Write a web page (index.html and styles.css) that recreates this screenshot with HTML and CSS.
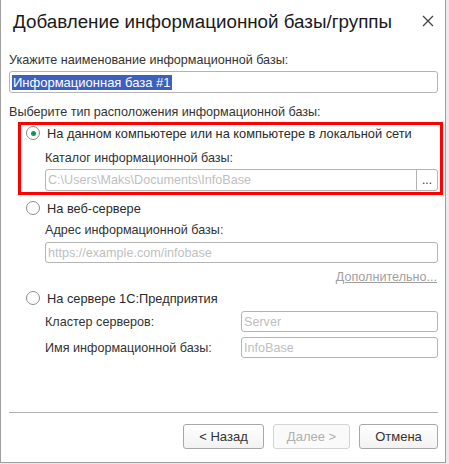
FILE: index.html
```html
<!DOCTYPE html>
<html lang="ru">
<head>
  <meta charset="UTF-8">
  <title>Добавление информационной базы/группы</title>
  <link rel="stylesheet" href="styles.css">
</head>
<body>

<div class="window">
  <!-- Title -->
  <div class="title-bar">
    <span class="title">Добавление информационной базы/группы</span>
    <span class="close">
      <svg width="12" height="12" viewBox="0 0 12 12"><path d="M1 1L11 11M11 1L1 11" stroke="#444" stroke-width="1.3"/></svg>
    </span>
  </div>

  <div class="content">
    <div class="row label">Укажите наименование информационной базы:</div>
    <div class="field name-field"><span class="selected">Информационная база #1</span></div>

    <div class="row label type-label">Выберите тип расположения информационной базы:</div>

    <div class="highlight">
      <div class="radio-row first">
        <span class="radio checked"></span>
        <span>На данном компьютере или на компьютере в локальной сети</span>
      </div>
      <div class="row sub label">Каталог информационной базы:</div>
      <div class="field sub path-field">
        <span class="placeholder">C:\Users\Maks\Documents\InfoBase</span>
        <span class="choose">...</span>
      </div>
    </div>

    <div class="radio-row web">
      <span class="radio"></span>
      <span>На веб-сервере</span>
    </div>
    <div class="row sub label addr-label">Адрес информационной базы:</div>
    <div class="field sub url-field"><span class="placeholder">https://example.com/infobase</span></div>
    <div class="row link-row"><a class="more">Дополнительно...</a></div>

    <div class="radio-row server">
      <span class="radio"></span>
      <span>На сервере 1С:Предприятия</span>
    </div>
    <div class="pair cluster">
      <span class="label">Кластер серверов:</span>
      <div class="field short"><span class="placeholder">Server</span></div>
    </div>
    <div class="pair ibname">
      <span class="label">Имя информационной базы:</span>
      <div class="field short"><span class="placeholder">InfoBase</span></div>
    </div>

    <div class="separator"></div>

    <div class="buttons">
      <button class="btn back">&lt; Назад</button>
      <button class="btn next" disabled>Далее &gt;</button>
      <button class="btn cancel">Отмена</button>
    </div>
  </div>
</div>

</body>
</html>
```

FILE: styles.css
```css
body, html {
  margin: 0;
  padding: 0;
  font-family: "Liberation Sans", Arial, sans-serif;
  background-color: #e9ecef;
}
.window {
  width: 444px;
  height: 462px;
  background: white;
  border-left: 1px solid #a0a0a0;
  border-right: 1px solid #a0a0a0;
  border-bottom: 1px solid #a0a0a0;
}
.title-bar {
  height: 44px;
  display: flex;
  align-items: center;
  justify-content: space-between;
  padding: 0 11px 0 12px;
}
.title {
  font-size: 18.8px;
  color: #1a1a1a;
}
.close {
  display: flex;
  margin-top: -2px;
}
.content {
  padding: 0 7px 0 8px;
  font-size: 12.6px;
  color: #333;
}
.row {
  height: 20px;
  display: flex;
  align-items: center;
}
.label {
  white-space: nowrap;
}
.content > .row.label:first-child {
  margin-top: 6px;
}
.field {
  height: 22px;
  box-sizing: border-box;
  border: 1px solid #b4b4b4;
  border-radius: 3px;
  display: flex;
  align-items: center;
  padding-left: 2px;
  overflow: hidden;
}
.name-field {
  margin-top: 1px;
  color: #1a1a1a;
}
.selected {
  background: #3d5fbf;
  color: white;
  line-height: 15px;
  padding: 0 1px;
  font-size: 13px;
}
.type-label {
  margin-top: 9px;
}
.placeholder {
  color: #c0c0c0;
  flex-grow: 1;
}
.highlight {
  margin: 0 -5px 0 9px;
  border: 3px solid #ff0000;
  padding: 0 2px 1px 5px;
}
.radio-row {
  display: flex;
  align-items: center;
  height: 20px;
  gap: 7px;
  font-size: 12.8px;
  color: #2b2b2b;
}
.radio-row.first {
  height: 14px;
  margin-top: 1px;
}
.radio {
  width: 14px;
  height: 14px;
  box-sizing: border-box;
  border: 1px solid #8c8c8c;
  border-radius: 50%;
  display: flex;
  align-items: center;
  justify-content: center;
  background: white;
}
.radio.checked::after {
  content: "";
  width: 5px;
  height: 5px;
  border-radius: 50%;
  background: #14935a;
}
.highlight .sub {
  margin-left: 19px;
}
.highlight .row.sub {
  margin-top: 8px;
}
.path-field {
  margin-top: 1px;
  padding-right: 0;
}
.choose {
  width: 20px;
  height: 100%;
  border-left: 1px solid #b4b4b4;
  display: flex;
  align-items: center;
  justify-content: center;
  color: #333;
  font-size: 12px;
}
.radio-row.web {
  margin-top: 3px;
  margin-left: 17px;
}
.content > .sub {
  margin-left: 36px;
}
.addr-label {
  margin-top: 2px;
}
.url-field {
  margin-top: 2px;
  height: 21px;
}
.link-row {
  justify-content: flex-end;
  margin-top: 4px;
  padding-right: 1px;
}
.more {
  color: #a0a0a0;
  text-decoration: underline;
  cursor: pointer;
}
.radio-row.server {
  margin-top: 1px;
  margin-left: 17px;
}
.pair {
  display: flex;
  align-items: center;
  justify-content: space-between;
  margin-left: 36px;
  height: 21px;
}
.pair.cluster {
  margin-top: 3px;
}
.pair.ibname {
  margin-top: 5px;
}
.field.short {
  width: 197px;
  height: 21px;
}
.separator {
  height: 1px;
  background: #b0b0b0;
  margin-top: 54px;
}
.buttons {
  display: flex;
  justify-content: flex-end;
  gap: 9px;
  margin-top: 11px;
}
.btn {
  height: 25px;
  font-family: "Liberation Sans", Arial, sans-serif;
  font-size: 13px;
  color: #333;
  background: linear-gradient(#ffffff, #f2f2f2);
  border: 1px solid #a8a8a8;
  border-radius: 3px;
  padding: 0;
}
.btn.back {
  width: 81px;
}
.btn.next {
  width: 77px;
}
.btn.cancel {
  width: 79px;
}
.btn:disabled {
  color: #b0b0b0;
  border-color: #d4d4d4;
  background: #fafafa;
}
```
